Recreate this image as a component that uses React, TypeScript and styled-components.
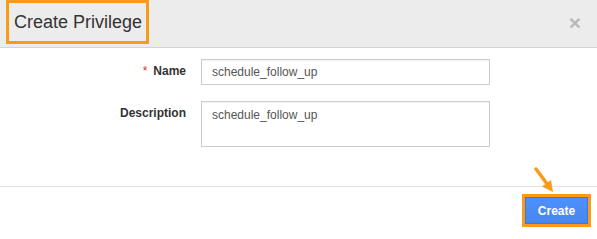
import React from "react";
import styled, { createGlobalStyle } from "styled-components";

const GlobalStyle = createGlobalStyle`
  html, body { margin: 0; padding: 0; background: #ffffff; }
  body { font-family: "Liberation Sans", Arial, sans-serif; color: #333; }
  * { box-sizing: border-box; }
`;

const ORANGE = "#fb9a14";

const Modal = styled.div`
  position: relative;
  width: 597px;
  height: 239px;
  background: #ffffff;
  overflow: hidden;
`;

const Header = styled.div`
  display: flex;
  align-items: flex-start;
  justify-content: space-between;
  height: 48px;
  padding: 0 16px 0 6px;
  background: #ececec;
  border-bottom: 1px solid #d4d4d4;
`;

const TitleBox = styled.div`
  height: 44px;
  padding: 9px 4px 9px 5px;
  border: 3px solid ${ORANGE};
  font-size: 18px;
  line-height: 20px;
  color: #333;
`;

const Close = styled.button`
  margin-top: 12px;
  padding: 0;
  border: 0;
  background: transparent;
  font-family: "Liberation Sans", Arial, sans-serif;
  font-size: 21px;
  font-weight: bold;
  line-height: 1;
  color: #000;
  opacity: 0.22;
  cursor: pointer;
`;

const Body = styled.div`
  padding: 11px 0 39px;
`;

const FormGrid = styled.div`
  display: grid;
  grid-template-columns: 186px 289px;
  column-gap: 15px;
  row-gap: 16px;
`;

const Label = styled.label`
  padding-top: 4px;
  text-align: right;
  font-size: 12px;
  line-height: 17px;
  font-weight: bold;
  color: #333;
`;

const Required = styled.span`
  color: #e02424;
  font-weight: normal;
  margin-right: 6px;
`;

const fieldBase = `
  width: 289px;
  border: 1px solid #cccccc;
  border-radius: 0;
  box-shadow: inset 0 1px 1px rgba(0,0,0,0.05);
  font-family: "Liberation Sans", Arial, sans-serif;
  font-size: 12px;
  color: #555;
  background: #fff;
  outline: none;
`;

const TextInput = styled.input`
  ${fieldBase}
  height: 26px;
  padding: 0 10px;
`;

const TextArea = styled.textarea`
  ${fieldBase}
  height: 46px;
  padding: 6px 10px;
  line-height: 15px;
  resize: none;
`;

const Footer = styled.div`
  display: flex;
  justify-content: flex-end;
  padding: 7px 6px 0;
  border-top: 1px solid #e2e2e2;
`;

const Highlight = styled.div`
  border: 3px solid ${ORANGE};
`;

const PrimaryButton = styled.button`
  display: block;
  width: 63px;
  height: 27px;
  padding: 0;
  border: 1px solid #3b78e7;
  background: linear-gradient(#4d90fe, #4787ed);
  color: #fff;
  font-family: "Liberation Sans", Arial, sans-serif;
  font-size: 12px;
  font-weight: bold;
  cursor: pointer;
`;

const Arrow = styled.svg`
  position: absolute;
  left: 530px;
  top: 164px;
  overflow: visible;
`;

export default function App() {
  return (
    <>
      <GlobalStyle />
      <Modal>
        <Header>
          <TitleBox>Create Privilege</TitleBox>
          <Close aria-label="Close">×</Close>
        </Header>
        <Body>
          <FormGrid>
            <Label htmlFor="name">
              <Required>*</Required>Name
            </Label>
            <TextInput id="name" defaultValue="schedule_follow_up" />
            <Label htmlFor="desc">Description</Label>
            <TextArea id="desc" defaultValue="schedule_follow_up" />
          </FormGrid>
        </Body>
        <Footer>
          <Highlight>
            <PrimaryButton>Create</PrimaryButton>
          </Highlight>
        </Footer>
        <Arrow width="30" height="32" viewBox="0 0 30 32">
          <line x1="6" y1="5" x2="17.5" y2="20.5" stroke={ORANGE} strokeWidth="3.5" strokeLinecap="round" />
          <polygon points="23,28 12,22.5 21,16" fill={ORANGE} />
        </Arrow>
      </Modal>
    </>
  );
}
